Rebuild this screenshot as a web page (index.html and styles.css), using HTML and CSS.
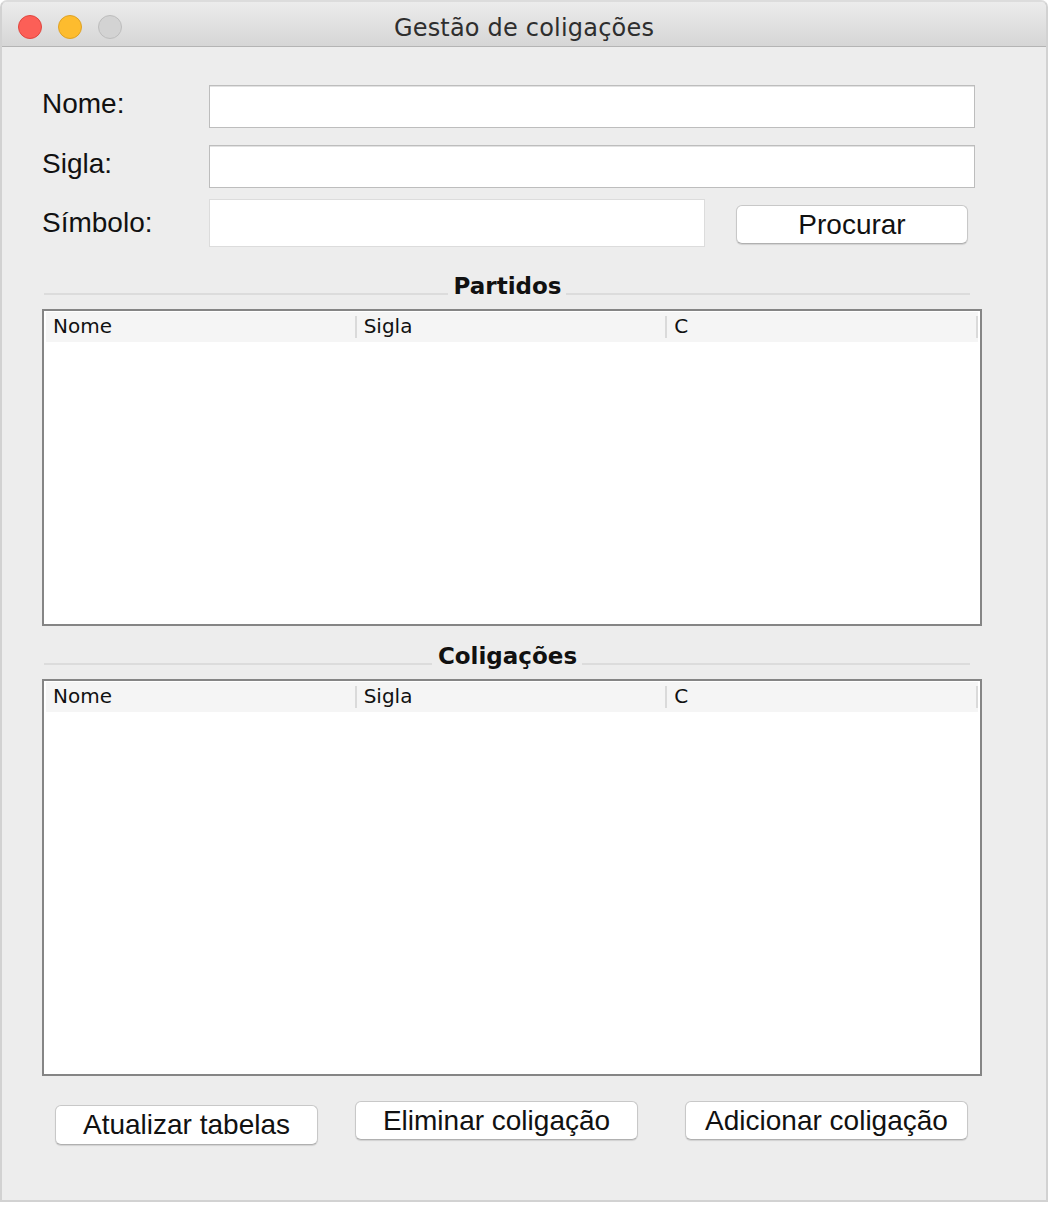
FILE: index.html
```html
<!DOCTYPE html>
<html lang="pt">
<head>
  <meta charset="UTF-8">
  <title>Gestão de coligações</title>
  <link rel="stylesheet" href="styles.css">
</head>
<body>

  <div class="window">
    <!-- Barra de título -->
    <div class="titlebar">
      <div class="lights">
        <span class="light close"></span>
        <span class="light minimize"></span>
        <span class="light zoom"></span>
      </div>
      <div class="title">Gestão de coligações</div>
      <div></div>
    </div>

    <div class="content">
      <!-- Pesquisa -->
      <div class="form">
        <div class="field-row">
          <label class="field-label">Nome:</label>
          <input class="field" type="text">
        </div>
        <div class="field-row row-sigla">
          <label class="field-label">Sigla:</label>
          <input class="field" type="text">
        </div>
        <div class="field-row row-simbolo">
          <label class="field-label">Símbolo:</label>
          <input class="field field-short" type="text">
          <button class="btn btn-search">Procurar</button>
        </div>
      </div>

      <!-- Partidos -->
      <div class="section-title"><span>Partidos</span></div>
      <div class="table table-partidos">
        <div class="thead">
          <div class="th">Nome</div>
          <div class="th">Sigla</div>
          <div class="th">C</div>
        </div>
      </div>

      <!-- Coligações -->
      <div class="section-title section-second"><span>Coligações</span></div>
      <div class="table table-coligacoes">
        <div class="thead">
          <div class="th">Nome</div>
          <div class="th">Sigla</div>
          <div class="th">C</div>
        </div>
      </div>

      <div class="actions">
        <button class="btn btn-refresh">Atualizar tabelas</button>
        <button class="btn btn-delete">Eliminar coligação</button>
        <button class="btn btn-add">Adicionar coligação</button>
      </div>
    </div>
  </div>

</body>
</html>
```

FILE: styles.css
```css
body {
  margin: 0;
  padding: 0;
  background: #ffffff;
  font-family: "Liberation Sans", Arial, sans-serif;
}

.window {
  width: 1048px;
  height: 1202px;
  box-sizing: border-box;
  border: 2px solid #d2d2d2;
  border-top-color: #dcdcdc;
  border-radius: 7px 7px 0 0;
  background: #ededed;
  overflow: hidden;
}

/* Barra de título */
.titlebar {
  height: 44px;
  display: grid;
  grid-template-columns: 1fr auto 1fr;
  align-items: center;
  background: linear-gradient(#ececec, #d6d6d6);
  border-bottom: 1px solid #b4b4b4;
}

.lights {
  display: flex;
  gap: 16px;
  padding-left: 16px;
  margin-top: 6px;
}

.light {
  width: 22px;
  height: 22px;
  border-radius: 50%;
  border: 1px solid transparent;
}

.light.close {
  background: #fc5f57;
  border-color: #e0463f;
}

.light.minimize {
  background: #fdbc2e;
  border-color: #dea225;
}

.light.zoom {
  background: #d3d3d3;
  border-color: #bdbdbd;
}

.title {
  font-family: "DejaVu Sans", sans-serif;
  font-size: 24px;
  letter-spacing: 0.2px;
  color: #2e2e2e;
  margin-top: 8px;
}

.content {
  padding: 38px 64px 0 40px;
}

/* Formulário */
.form {
  margin-right: 7px;
}

.field-row {
  display: flex;
  align-items: center;
}

.row-sigla {
  margin-top: 17px;
}

.row-simbolo {
  margin-top: 11px;
}

.field-label {
  width: 167px;
  font-size: 28px;
  color: #111;
  margin-top: -6px;
}

.row-simbolo .field-label {
  margin-top: -1px;
}

.field {
  flex: 1;
  height: 43px;
  box-sizing: border-box;
  border: 1px solid #bdbdbd;
  box-shadow: inset 0 1px 0 #e2e2e2;
  background: #fff;
  margin: 0;
}

.field-short {
  flex: none;
  width: 496px;
  height: 48px;
  border-color: #dcdcdc;
  box-shadow: none;
}

.btn {
  font-family: "Liberation Sans", Arial, sans-serif;
  font-size: 28px;
  color: #111;
  background: #fff;
  border: 1px solid #c8c8c8;
  border-bottom-color: #b0b0b0;
  border-radius: 6px;
  box-shadow: 0 1px 1px rgba(0, 0, 0, 0.12);
  padding: 0;
  height: 39px;
  cursor: pointer;
}

.btn-search {
  width: 232px;
  margin: 3px 0 0 31px;
}

/* Títulos das secções */
.section-title {
  display: flex;
  align-items: center;
  margin: 28px 12px 0 2px;
  font-family: "DejaVu Sans", sans-serif;
  font-weight: bold;
  font-size: 23px;
  line-height: 1;
  color: #111;
}

.section-title::before,
.section-title::after {
  content: "";
  flex: 1;
  height: 2px;
  background: #dcdcdc;
  margin-top: 14px;
}

.section-title span {
  padding: 0 5px 0 6px;
}

.section-second {
  margin-top: 19px;
}

/* Tabelas */
.table {
  margin-top: 11px;
  border: 2px solid #858585;
  background: #fff;
  padding: 1px 2px 2px;
  box-sizing: border-box;
}

.table-partidos {
  height: 317px;
}

.table-coligacoes {
  height: 397px;
}

.thead {
  display: flex;
  height: 30px;
  background: #f5f5f5;
}

.th {
  flex: 1;
  position: relative;
  padding-left: 7px;
  font-family: "DejaVu Sans", sans-serif;
  font-size: 20px;
  line-height: 28px;
  color: #111;
}

.th::after {
  content: "";
  position: absolute;
  right: 0;
  top: 4px;
  bottom: 4px;
  width: 2px;
  background: #dadada;
}

/* Botões de baixo */
.actions {
  display: flex;
  align-items: flex-start;
  margin-top: 25px;
}

.btn-refresh {
  width: 263px;
  height: 40px;
  margin: 4px 0 0 13px;
}

.btn-delete {
  width: 283px;
  margin-left: 37px;
}

.btn-add {
  width: 283px;
  margin-left: 47px;
}
```
